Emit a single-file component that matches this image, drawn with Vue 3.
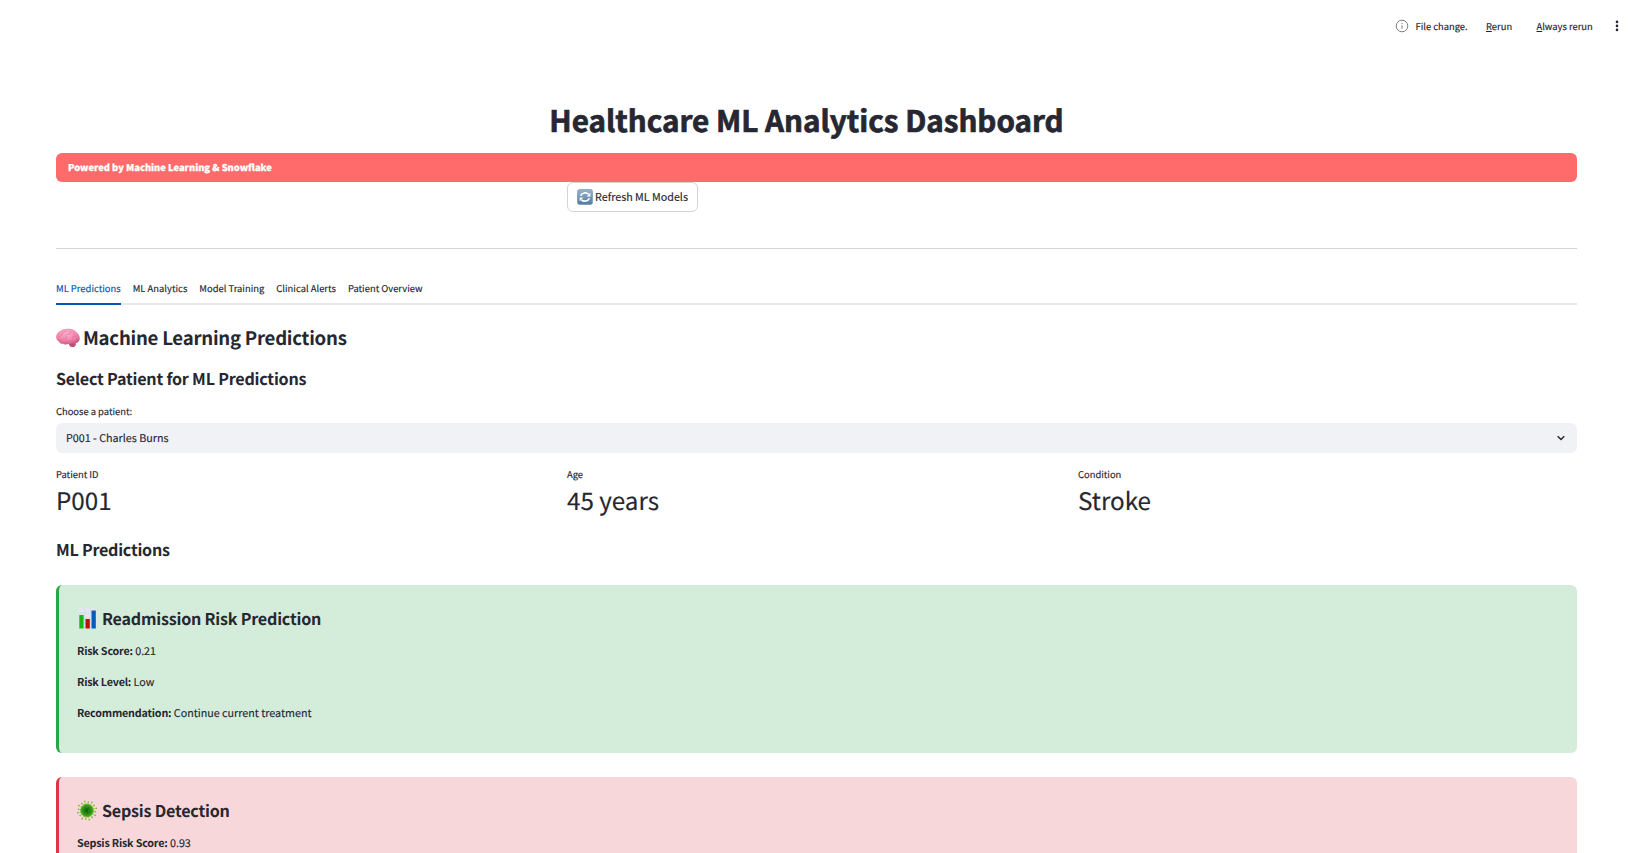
<script setup>
const tabs = ['ML Predictions', 'ML Analytics', 'Model Training', 'Clinical Alerts', 'Patient Overview']
const metrics = [
  { label: 'Patient ID', value: 'P001' },
  { label: 'Age', value: '45 years' },
  { label: 'Condition', value: 'Stroke' },
]
const readmission = [
  ['Risk Score:', '0.21'],
  ['Risk Level:', 'Low'],
  ['Recommendation:', 'Continue current treatment'],
]
const spikes = Array.from({ length: 16 }, (_, i) => {
  const a = (i * Math.PI) / 8 + 0.15
  const r = i % 2 ? 9.5 : 8.6
  return { x: 10 + Math.cos(a) * r, y: 10 + Math.sin(a) * r }
})
</script>

<template>
  <div class="app">
    <header class="toolbar">
      <svg class="info" viewBox="0 0 14 14"><circle cx="7" cy="7" r="5.8" /><path d="M7 6.3v3.5M7 4v1.1" /></svg>
      <span class="status">File change.</span>
      <span class="rerun"><u>R</u>erun</span>
      <span class="always"><u>A</u>lways rerun</span>
      <svg class="dots" viewBox="0 0 4 12"><circle cx="2" cy="1.9" r="1.3" /><circle cx="2" cy="5.9" r="1.3" /><circle cx="2" cy="9.9" r="1.3" /></svg>
    </header>

    <main>
      <h1><span>Healthcare ML Analytics Dashboard</span></h1>
      <div class="banner">Powered by Machine Learning &amp; Snowflake</div>
      <button class="refresh">
        <svg viewBox="0 0 16 16">
          <defs>
            <linearGradient id="tile" x1="0" y1="0" x2="0" y2="1">
              <stop offset="0" stop-color="#91b4d0" /><stop offset="1" stop-color="#547c9f" />
            </linearGradient>
          </defs>
          <rect x=".5" y=".5" width="15" height="15" rx="2" fill="url(#tile)" stroke="#6c8fad" stroke-width=".6" />
          <path d="M3.600 6.800A4.800 4.200 0 0 1 11.600 5.200M12.400 9.200A4.800 4.200 0 0 1 4.400 10.800" fill="none" stroke="#fff" stroke-width="1.700" />
          <path d="M13.400 3.800v3.800H9.600zM2.600 12.200V8.400h3.800z" fill="#fff" />
        </svg>
        <span>Refresh ML Models</span>
      </button>
      <hr />

      <nav class="tabs">
        <span v-for="(t, i) in tabs" :key="t" :class="['tab', { active: i === 0 }]">{{ t }}</span>
      </nav>

      <h2>
        <svg viewBox="0 0 24 20">
          <defs>
            <radialGradient id="brain" cx=".45" cy=".3" r=".7">
              <stop offset="0" stop-color="#ffb3cf" /><stop offset=".65" stop-color="#f183ab" /><stop offset="1" stop-color="#cb587f" />
            </radialGradient>
          </defs>
          <path d="M13 14.500c2-.8 6-.3 7 1.200 0 2.500-2.300 3.800-4.300 3.300-2-.3-3.200-2.500-2.700-4.500z" fill="#bf4c73" />
          <path d="M.2 9.500C-.1 6.500 2 3.800 4.500 2.800 6.500 1 9.500.3 12 .8c3-.4 6.300.7 8 3 2.300 1.500 4 4.200 3.700 6.700.2 2.800-2.500 5-5.200 5-2 .6-4 .5-5.500.2-1.700 1-4 1.200-5.500 0-2 .3-3.800-.5-4.500-2C1.500 12.700.4 11.300.2 9.500z" fill="url(#brain)" />
          <path d="M3 9c1-2 3-1 3.500-3S9 4 10 3M5 12c1.500.5 2-1.500 4-1s2-2 1-3 1-2.500 3-2 2-1.500 1-2.500M8 14c2 0 3-1.500 5-1s4-.5 3.500-2.500 1-2.500 2.500-2-.5-2.500-2-3M18 13.500c1.500-.5 2.500-1.500 2.500-3.500M2.500 11.500l1 .8" fill="none" stroke="#d4668d" stroke-width=".55" stroke-linecap="round" />
        </svg>
        <span>Machine Learning Predictions</span>
      </h2>
      <h3 class="select-title">Select Patient for ML Predictions</h3>
      <label>Choose a patient:</label>
      <div class="select">
        <span>P001 - Charles Burns</span>
        <svg viewBox="0 0 10 8"><path d="M1.700 2.300 5 5.500 8.300 2.300" /></svg>
      </div>

      <section class="metrics">
        <div v-for="m in metrics" :key="m.label">
          <div class="metric-label">{{ m.label }}</div>
          <div class="metric-value">{{ m.value }}</div>
        </div>
      </section>

      <h3 class="pred-title">ML Predictions</h3>

      <article class="card low">
        <h3>
          <svg viewBox="0 0 20 21">
            <rect x="1.500" y="0" width="18" height="21" fill="#e1e8ee" />
            <path d="M1.500 5h18M1.500 10h18M1.500 15h18M7.500 0v21M13.500 0v21" stroke="#cbd8e5" stroke-width=".5" />
            <rect x="2.300" y="7" width="4.300" height="13.500" fill="#12b917" />
            <rect x="8.500" y="11" width="4.300" height="9.500" fill="#c20d12" />
            <rect x="14.500" y="2.500" width="4.300" height="18" fill="#0a59bd" />
          </svg>
          <span>Readmission Risk Prediction</span>
        </h3>
        <p v-for="[k, v] in readmission" :key="k"><strong>{{ k }}</strong> {{ v }}</p>
      </article>

      <article class="card high">
        <h3>
          <svg viewBox="0 0 20 20">
            <defs>
              <radialGradient id="germ"><stop offset="0" stop-color="#0c5b0b" /><stop offset=".6" stop-color="#238b12" /><stop offset="1" stop-color="#55b51c" /></radialGradient>
            </defs>
            <path v-for="(s, i) in spikes" :key="'l' + i" :d="`M10 10L${s.x} ${s.y}`" stroke="#8cc63e" stroke-width=".6" />
            <circle v-for="(s, i) in spikes" :key="i" :cx="s.x" :cy="s.y" r=".8" fill="#72b52b" />
            <circle cx="10" cy="10" r="6.500" fill="url(#germ)" stroke="#4baa1b" stroke-width=".8" stroke-dasharray="1 .7" />
            <path d="M7 8l1-1M10 6.500h1M12.500 9l1 1M8 12l1 1M11 11l1-.5M12 13.500l.8-.5" stroke="#46a82c" stroke-width=".8" />
          </svg>
          <span>Sepsis Detection</span>
        </h3>
        <p><strong>Sepsis Risk Score:</strong> 0.93</p>
      </article>
    </main>
  </div>
</template>

<style>
html, body { overflow: hidden; background: #fff; }
</style>

<style scoped>
.app {
  height: 853px;
  overflow: hidden;
  color: #262730;
  background: #fff;
  font-family: "Noto Sans CJK SC", "Noto Sans CJK JP", "Open Sans", sans-serif;
  font-size: 10.74px;
  text-rendering: geometricPrecision;
  -webkit-text-stroke-width: .15px;
}
* { box-sizing: border-box; }
h1, h2, h3, p { margin: 0; }
h2, h3, strong { -webkit-text-stroke-width: 0; }
svg { flex: none; display: block; }
span, label { white-space: nowrap; }

.toolbar { height: 51px; display: flex; align-items: center; justify-content: flex-end; padding-right: 20px; font-size: 9.4px; }
.info { width: 14px; height: 14px; margin-right: 6.500px; fill: none; stroke: #7e7f85; stroke-width: 1; }
.status { width: 70.500px; }
.rerun { width: 50.500px; }
.always { width: 78.500px; }
.toolbar u { text-underline-offset: 1px; }
.dots { width: 4px; height: 12px; fill: #262730; }

main { margin: 49px 62px 0 56px; display: flex; flex-direction: column; }
h1 { font-size: 29.600px; line-height: 40px; font-weight: 700; text-align: center; padding-right: 20px; -webkit-text-stroke-width: .7px; }
.banner { margin-top: 13px; height: 29px; line-height: 29px; padding-left: 12px; border-radius: 6px; background: #ff6b6b; color: #fff; font-size: 9.4px; font-weight: 900; -webkit-text-stroke-width: .25px; }
.refresh { align-self: flex-start; margin-left: 511px; width: 131px; height: 30px; padding: 0 0 0 9px; display: flex; align-items: center; gap: 2px; font: inherit; color: inherit; background: #fff; border: 1px solid #d4d4d7; border-radius: 6px; }
.refresh svg { width: 16px; height: 16px; }
.refresh span { margin-bottom: 2px; }
hr { width: 100%; margin: 36px 0 0; border: 0; height: 1px; background: #d4d4d6; }
.tabs { margin-top: 24px; height: 32px; display: flex; gap: 12px; border-bottom: 2px solid #e9e9ea; font-size: 9.4px; letter-spacing: .02px; line-height: 30px; }
.tab { height: 32px; }
.tab.active { color: #0054b8; border-bottom: 2px solid #0054b8; }
h2 { margin-top: 18px; display: flex; align-items: center; gap: 3px; font-size: 18.600px; letter-spacing: -.25px; line-height: 30px; font-weight: 600; }
h2 svg { width: 24px; height: 20px; }
h3 { font-size: 16.100px; line-height: 24px; font-weight: 600; letter-spacing: -.21px; }
.pred-title { letter-spacing: -.25px; }
.select-title { margin-top: 13px; }
label { margin-top: 13px; font-size: 9.4px; line-height: 16px; }
.select { margin-top: 4px; height: 30px; padding: 0 11px 0 10px; display: flex; align-items: center; justify-content: space-between; border-radius: 6px; background: #f0f2f6; }
.select svg { width: 10px; height: 8px; fill: none; stroke: #262730; stroke-width: 1.500; }
.metrics { margin-top: 13px; display: grid; grid-template-columns: repeat(3, 1fr); column-gap: 12px; height: 52px; }
.metric-label { font-size: 9.4px; line-height: 16px; }
.metric-value { font-size: 24.2px; line-height: 36px; }
.pred-title { margin-top: 19px; }
.card { border-left: 3px solid; border-radius: 6px; padding: 21px 18px 0; height: 168px; margin-top: 24px; }
.card h3 { display: flex; align-items: center; gap: 5px; margin-bottom: 13px; }
.card svg { width: 20px; height: 21px; }
.card p { line-height: 18px; margin-bottom: 13px; }
.card strong { font-weight: 600; letter-spacing: -.19px; }
.low { background: #d4edda; border-color: #28a745; }
.high { background: #f8d7da; border-color: #dc3545; }
</style>
